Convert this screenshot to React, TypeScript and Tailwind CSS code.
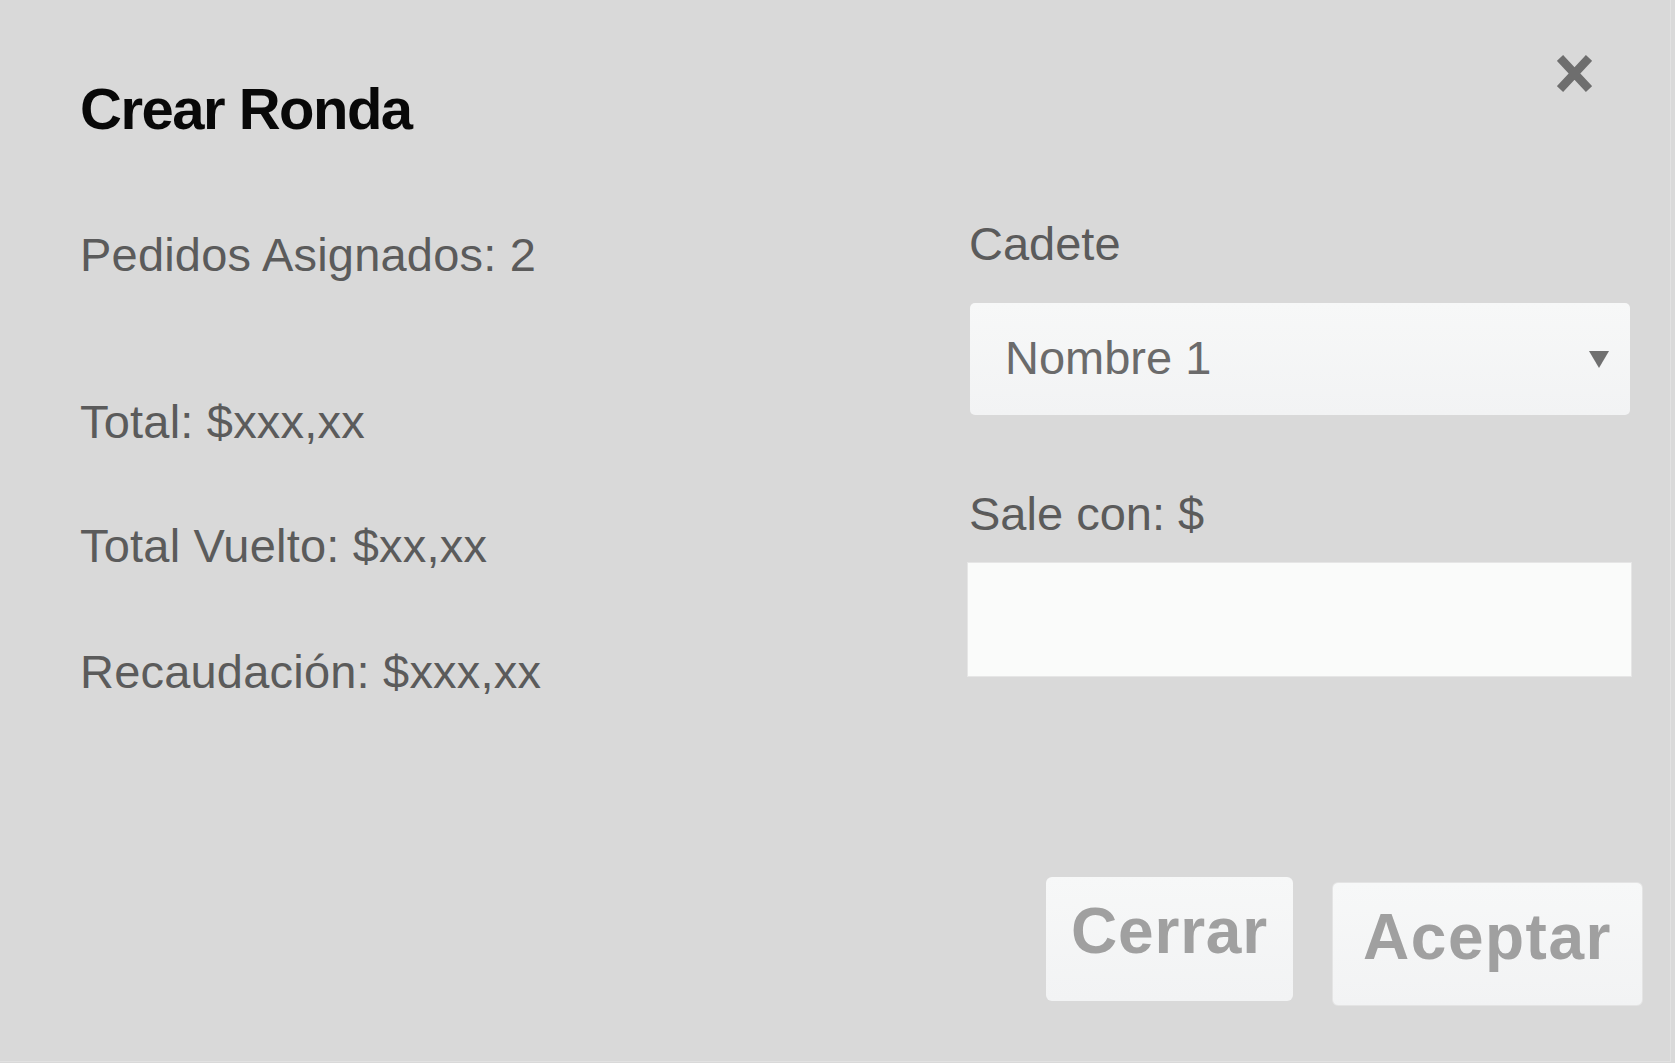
const font = { fontFamily: '"Liberation Sans", Arial, Helvetica, sans-serif' };

function CloseIcon() {
  return (
    <svg width="35" height="37" viewBox="0 0 35 37" fill="none">
      <path d="M3 3 L32 34 M32 3 L3 34" stroke="#6e6e6e" strokeWidth="8.5" strokeLinecap="butt" />
    </svg>
  );
}

const stats = [
  { label: 'Pedidos Asignados: 2', mt: 'mt-[93px]' },
  { label: 'Total: $xxx,xx', mt: 'mt-[120px]' },
  { label: 'Total Vuelto: $xx,xx', mt: 'mt-[77px]' },
  { label: 'Recaudación: $xxx,xx', mt: 'mt-[79px]' },
];

export default function App() {
  return (
    <div className="w-[1675px] h-[1063px] bg-[#d9d9d9] overflow-hidden" style={font}>
      <div className="relative w-[1671px] h-[1062px] border-r border-b border-[#e2e2e2]">
        {/* Close */}
        <button className="absolute left-[1557px] top-[55px] block">
          <CloseIcon />
        </button>

        {/* Title */}
        <div className="pt-[80px] pl-[80px]">
          <h2 className="text-[58px] leading-[58px] font-bold tracking-[-1.5px] text-[#080808]">
            Crear Ronda
          </h2>
        </div>

        {/* Body */}
        <div className="flex items-start">
          <div className="w-[967px] pl-[80px] flex flex-col">
            {stats.map((s) => (
              <p key={s.label} className={`${s.mt} text-[47px] leading-[47px] tracking-[0.2px] text-[#5b5b5b] whitespace-nowrap`}>
                {s.label}
              </p>
            ))}
          </div>

          <div className="w-[665px] flex flex-col">
            <label className="mt-[82px] ml-[2px] text-[47px] leading-[47px] text-[#5b5b5b]">Cadete</label>
            <div className="mt-[36px] ml-[3px] w-[660px] h-[112px] rounded-[5px] bg-gradient-to-b from-[#f7f8f8] to-[#f2f3f4] flex items-center justify-between pl-[35px] pr-[21px]">
              <span className="-mt-[3px] text-[47px] leading-[47px] text-[#6b6b6b]">Nombre 1</span>
              <svg width="20" height="17" viewBox="0 0 20 17">
                <path d="M0 0 H20 L10 17 Z" fill="#707070" />
              </svg>
            </div>
            <label className="mt-[75px] ml-[2px] text-[47px] leading-[47px] text-[#5b5b5b] whitespace-nowrap">
              Sale con: $
            </label>
            <div className="mt-[25px] w-[665px] h-[115px] bg-[#fafbfa] border border-[#e6e6e6]" />
          </div>
        </div>

        {/* Actions */}
        <div className="mt-[182px] flex items-start justify-end gap-[39px] pr-[27px]">
          <button className="w-[247px] h-[124px] pb-[17px] rounded-[6px] bg-gradient-to-b from-[#f7f8f8] to-[#f2f3f4] flex items-center justify-center text-[64px] leading-[64px] font-bold tracking-[0.8px] text-[#a0a0a0]">
            Cerrar
          </button>
          <button className="mt-[5px] w-[311px] h-[124px] pb-[14px] rounded-[6px] bg-gradient-to-b from-[#f7f8f8] to-[#f2f3f4] border border-[#e4e4e4] flex items-center justify-center text-[64px] leading-[64px] font-bold tracking-[1.5px] text-[#a0a0a0]">
            Aceptar
          </button>
        </div>
      </div>
    </div>
  );
}
